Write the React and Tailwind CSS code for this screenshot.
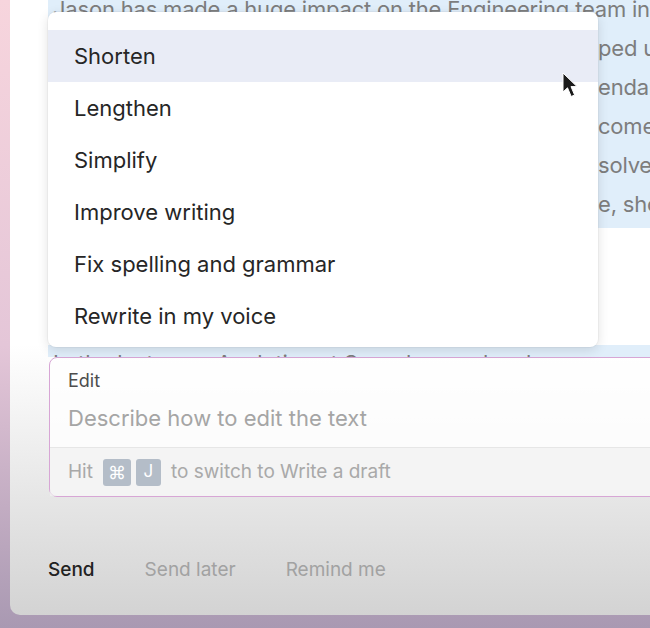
import { useState } from 'react'

const ACTIONS = ['Shorten', 'Lengthen', 'Simplify', 'Improve writing', 'Fix spelling and grammar', 'Rewrite in my voice']

// the left part of each line sits under the menu, only the tail shows
const LINES = [
  ['first year here. He built the internal tools that have hel', 'ped us move faster'],
  ['ship faster, and he rebuilt the sync engine behind the cal', 'endar'],
  ['so that it works at scale. He has quickly be', 'come the'],
  ['a go-to person for hard problems, and he helps others ', 'solve long'],
  ['standing issues. Above and beyond all of thes', 'e, showing'],
]

function Cursor() {
  return (
    <svg width="20" height="27" viewBox="0 0 20 27" className="absolute left-[514px] top-[60px]">
      <path d="M1 1 L1 20 L5.5 15.8 L9.2 24.5 L12.6 23 L9 14.6 L15 14.6 Z" fill="#1b1b1b" stroke="#ffffff" strokeWidth="1" strokeLinejoin="round" />
    </svg>
  )
}

function Menu() {
  const [active, setActive] = useState(0)
  return (
    <div className="absolute left-0 top-[12px] w-[550px] rounded-lg bg-white pt-[18px] pb-[5px] shadow-[0_3px_12px_rgba(0,0,0,0.12),0_0_0_1px_rgba(0,0,0,0.03)]">
      {ACTIONS.map((a, i) => (
        <div
          key={a}
          onMouseEnter={() => setActive(i)}
          className={`flex h-[52px] items-center px-[26px] text-[22px] text-[#262626] ${active === i ? 'bg-[#e9ecf6]' : ''}`}
        >
          {a}
        </div>
      ))}
      <Cursor />
    </div>
  )
}

export default function App() {
  return (
    <div
      className="h-[628px] w-[650px] overflow-hidden bg-[linear-gradient(to_bottom,#f7d5dd_0%,#e4c6d8_55%,#a999b2_100%)]"
      style={{ fontFamily: 'Inter, "Noto Sans", sans-serif' }}
    >
      <div className="ml-[10px] h-[615px] overflow-hidden rounded-bl-[10px] bg-[linear-gradient(to_bottom,#ffffff_0%,#ffffff_56%,#d3d3d3_100%)] pl-[38px]">
        <div className="relative flex flex-col">
          {/* selected paragraph */}
          <div className="-mt-[10px] bg-[#e0eefa] pb-[4px] pl-[5px] text-[22px] leading-[39px] tracking-[-0.2px] text-[#7d7d7d]">
            <div className="whitespace-nowrap">Jason has made a huge impact on the Engineering team in his</div>
            {LINES.map(([hidden, tail]) => (
              <div key={tail} className="flex whitespace-nowrap">
                <span className="w-[545px] shrink-0 overflow-hidden">{hidden}</span>
                <span>{tail}</span>
              </div>
            ))}
          </div>
          <div className="h-[117px] shrink-0" />
          <div className="h-[12px] shrink-0 overflow-hidden bg-[#e0eefa] pl-[5px] text-[22px] leading-[39px] text-[#7d7d7d]">
            <div className="-mt-[1px] whitespace-nowrap">In the last year, Analytics at Superhuman has become more</div>
          </div>

          <Menu />

          {/* edit box */}
          <div className="ml-[1px] w-[640px] shrink-0 rounded-lg border-[1.5px] border-[#d7a6d5] bg-white/80">
            <div className="px-[18px] pt-[12px] pb-[15px]">
              <div className="text-[18px] leading-[22px] text-[#4d4d4d]">Edit</div>
              <div className="mt-[12px] text-[22px] leading-[28px] text-[#a5a5a5]">Describe how to edit the text</div>
            </div>
            <div className="flex h-[49px] items-center border-t border-[#e6e6e6] bg-[#f1f1f1]/70 px-[18px] text-[19px] text-[#a9a9a9]">
              <span>Hit</span>
              <span className="ml-[10px] flex h-[27px] w-[28px] items-center justify-center rounded-[3px] bg-[#b4bdc8] text-[18px] text-white">⌘</span>
              <span className="ml-[5px] flex h-[27px] w-[25px] items-center justify-center rounded-[3px] bg-[#b4bdc8] text-[17px] text-white">J</span>
              <span className="ml-[10px]">to switch to Write a draft</span>
            </div>
          </div>

          <div className="mt-[26px] h-[1.5px] shrink-0 bg-[#e2e2e2]" />

          <div className="mt-[33px] flex items-center gap-[50px] text-[19px] leading-[24px]">
            <span className="font-medium text-[#222222]">Send</span>
            <span className="text-[#a2a2a2]">Send later</span>
            <span className="text-[#a2a2a2]">Remind me</span>
          </div>
        </div>
      </div>
    </div>
  )
}
